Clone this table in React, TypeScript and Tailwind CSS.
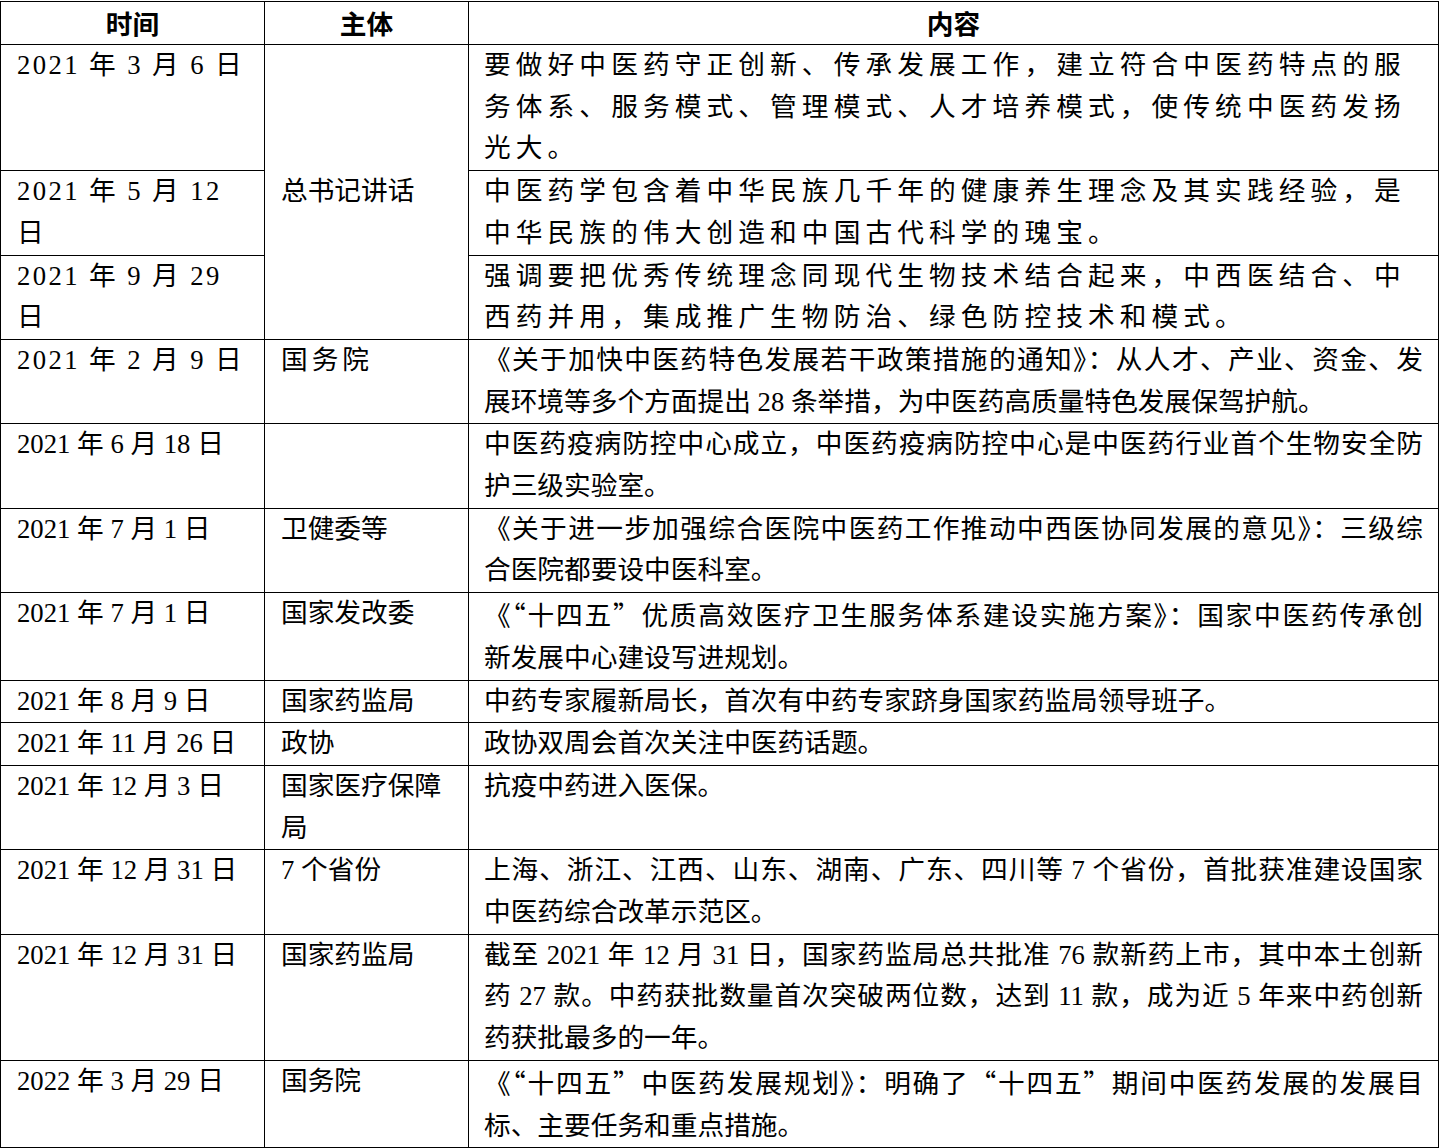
const q = (s: string) => <span className="font-['Noto_Sans_CJK_SC',sans-serif]">{s}</span>;

type Row = {
  date: string[];
  who?: string[];
  text: React.ReactNode[];
  wide?: boolean;
  whoWide?: boolean;
};

const rows: Row[] = [
  {
    date: ["2021 年 3 月 6 日"],
    text: [
      "要做好中医药守正创新、传承发展工作，建立符合中医药特点的服",
      "务体系、服务模式、管理模式、人才培养模式，使传统中医药发扬",
      "光大。",
    ],
    wide: true,
  },
  {
    date: ["2021 年 5 月 12", "日"],
    text: [
      "中医药学包含着中华民族几千年的健康养生理念及其实践经验，是",
      "中华民族的伟大创造和中国古代科学的瑰宝。",
    ],
    wide: true,
  },
  {
    date: ["2021 年 9 月 29", "日"],
    text: [
      "强调要把优秀传统理念同现代生物技术结合起来，中西医结合、中",
      "西药并用，集成推广生物防治、绿色防控技术和模式。",
    ],
    wide: true,
  },
  {
    date: ["2021 年 2 月 9 日"],
    who: ["国务院"],
    whoWide: true,
    text: [
      "《关于加快中医药特色发展若干政策措施的通知》：从人才、产业、资金、发",
      "展环境等多个方面提出 28 条举措，为中医药高质量特色发展保驾护航。",
    ],
  },
  {
    date: ["2021 年 6 月 18 日"],
    who: [],
    text: [
      "中医药疫病防控中心成立，中医药疫病防控中心是中医药行业首个生物安全防",
      "护三级实验室。",
    ],
  },
  {
    date: ["2021 年 7 月 1 日"],
    who: ["卫健委等"],
    text: [
      "《关于进一步加强综合医院中医药工作推动中西医协同发展的意见》：三级综",
      "合医院都要设中医科室。",
    ],
  },
  {
    date: ["2021 年 7 月 1 日"],
    who: ["国家发改委"],
    text: [
      <>《{q("“")}十四五{q("”")}优质高效医疗卫生服务体系建设实施方案》：国家中医药传承创</>,
      "新发展中心建设写进规划。",
    ],
  },
  {
    date: ["2021 年 8 月 9 日"],
    who: ["国家药监局"],
    text: ["中药专家履新局长，首次有中药专家跻身国家药监局领导班子。"],
  },
  {
    date: ["2021 年 11 月 26 日"],
    who: ["政协"],
    text: ["政协双周会首次关注中医药话题。"],
  },
  {
    date: ["2021 年 12 月 3 日"],
    who: ["国家医疗保障", "局"],
    text: ["抗疫中药进入医保。"],
  },
  {
    date: ["2021 年 12 月 31 日"],
    who: ["7 个省份"],
    text: [
      "上海、浙江、江西、山东、湖南、广东、四川等 7 个省份，首批获准建设国家",
      "中医药综合改革示范区。",
    ],
  },
  {
    date: ["2021 年 12 月 31 日"],
    who: ["国家药监局"],
    text: [
      "截至 2021 年 12 月 31 日，国家药监局总共批准 76 款新药上市，其中本土创新",
      "药 27 款。中药获批数量首次突破两位数，达到 11 款，成为近 5 年来中药创新",
      "药获批最多的一年。",
    ],
  },
  {
    date: ["2022 年 3 月 29 日"],
    who: ["国务院"],
    text: [
      <>《{q("“")}十四五{q("”")}中医药发展规划》：明确了{q("“")}十四五{q("”")}期间中医药发展的发展目</>,
      "标、主要任务和重点措施。",
    ],
  },
];

function Lines({
  lines,
  className = "",
  justify = false,
}: {
  lines: React.ReactNode[];
  className?: string;
  justify?: boolean;
}) {
  return (
    <>
      {lines.map((l, i) => (
        <span
          key={i}
          className={`block whitespace-pre ${className} ${justify && i < lines.length - 1 ? "[text-align-last:justify]" : ""}`}
        >
          {l}
        </span>
      ))}
    </>
  );
}

export default function App() {
  return (
    <div className="bg-white pt-px font-['Liberation_Serif','Noto_Sans_CJK_SC',serif] text-[26.7px] leading-[41.7px] text-black">
      <table className="w-[1438px] table-fixed border-collapse">
        <colgroup>
          <col className="w-[264px]" />
          <col className="w-[204px]" />
          <col className="w-[970px]" />
        </colgroup>
        <thead>
          <tr className="font-['Noto_Sans_CJK_SC',sans-serif] font-bold">
            <th className="h-[43px] border border-black py-0 text-center">时间</th>
            <th className="h-[43px] border border-black py-0 text-center">主体</th>
            <th className="h-[43px] border border-black py-0 text-center">内容</th>
          </tr>
        </thead>
        <tbody>
          {rows.map((r, i) => (
            <tr key={i}>
              <td className="border border-black pl-4 pr-3 align-top">
                <Lines lines={r.date} className={i < 4 ? "tracking-[2.4px]" : ""} />
              </td>
              {i === 0 && (
                <td rowSpan={3} className="border border-black pl-4 pr-3 align-middle">
                  总书记讲话
                </td>
              )}
              {r.who && (
                <td className="border border-black pl-4 pr-3 align-top">
                  <Lines lines={r.who} className={r.whoWide ? "tracking-[4px]" : ""} />
                </td>
              )}
              <td className="border border-black px-[15px] align-top text-justify">
                <Lines
                  lines={r.text}
                  justify={!r.wide}
                  className={r.wide ? "tracking-[5.1px]" : ""}
                />
              </td>
            </tr>
          ))}
        </tbody>
      </table>
    </div>
  );
}
